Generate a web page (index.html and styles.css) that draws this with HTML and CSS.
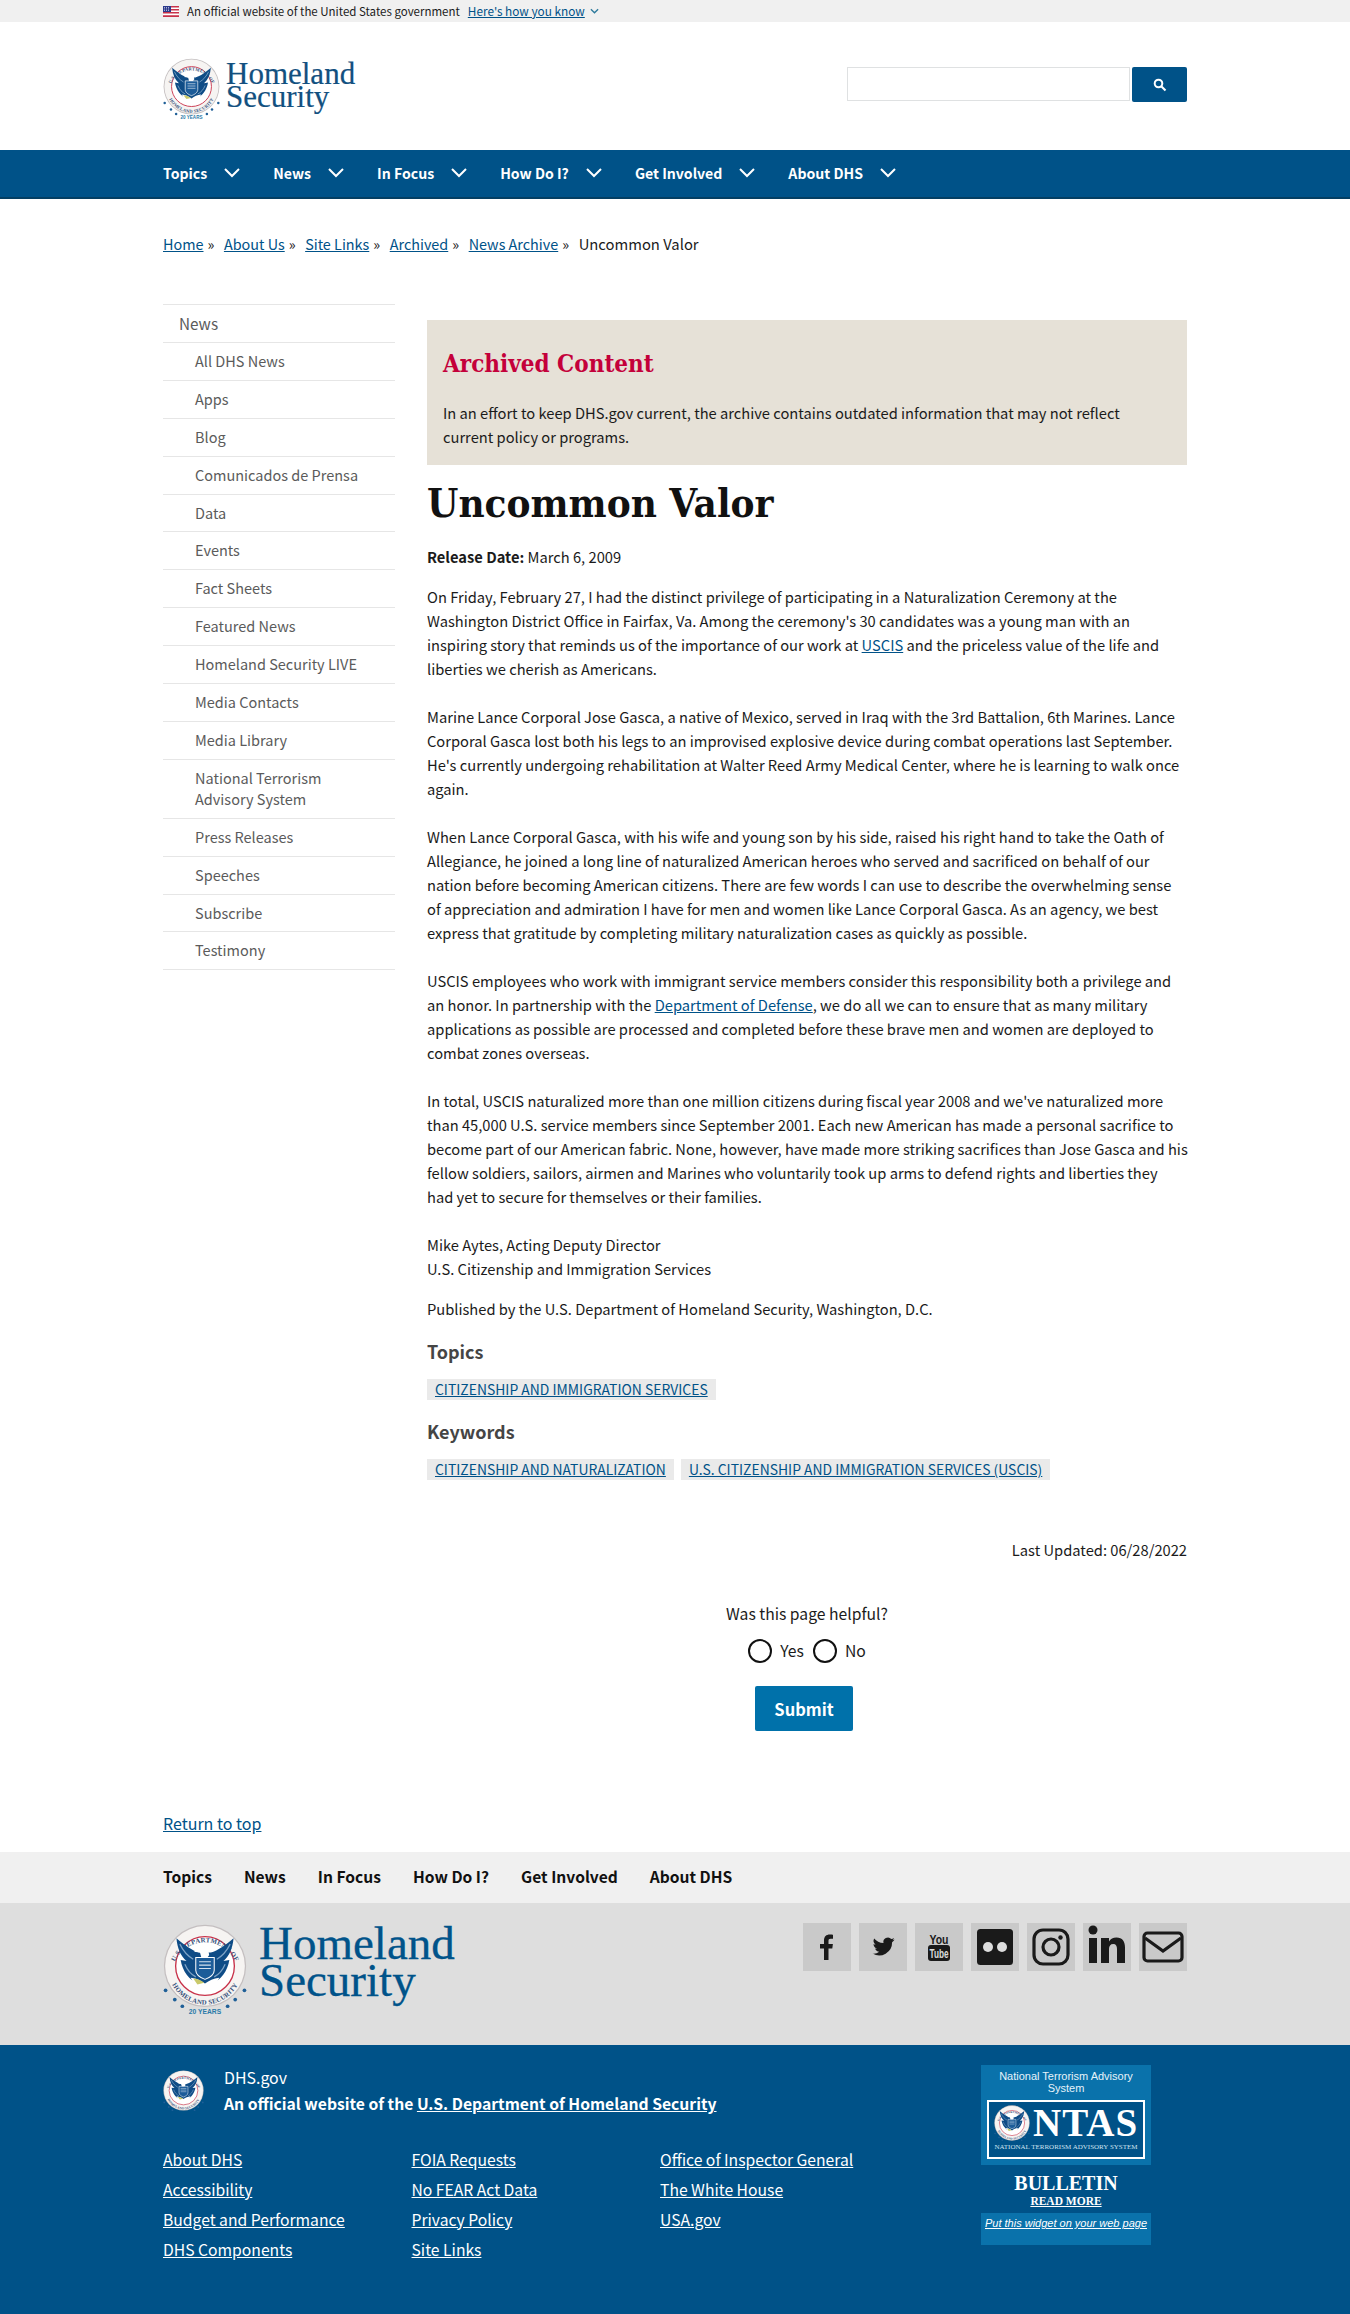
FILE: index.html
```html
<!DOCTYPE html>
<html lang="en">
<head>
<meta charset="utf-8">
<title>Uncommon Valor | Homeland Security</title>
<link rel="stylesheet" href="styles.css">
</head>
<body>
<svg class="defs" width="0" height="0" aria-hidden="true">
  <defs>
    <symbol id="seal" viewBox="0 0 100 112">
      <circle cx="50" cy="50" r="49" fill="#c4bfc0"/>
      <circle cx="50" cy="50" r="47.500" fill="#f6f4f2"/>
      <circle cx="50" cy="50" r="35" fill="#fff" stroke="#c8324a" stroke-width="1.600"/>
      <path id="sealtop" d="M11 55a39.500 39.500 0 0 1 78 0" fill="none"/>
      <path id="sealbot" d="M6 52a44 44 0 0 0 88 0" fill="none"/>
      <text class="sealtext"><textPath href="#sealtop" startOffset="50%" text-anchor="middle">U.S. DEPARTMENT OF</textPath></text>
      <text class="sealtext"><textPath href="#sealbot" startOffset="50%" text-anchor="middle">HOMELAND SECURITY</textPath></text>
      <path d="M43 34C35 32 24 24 16 17c1 12 5 21 12 27l-7-1c2 13 10 24 22 29h14c12-5 20-16 22-29l-7 1c7-6 11-15 12-27-8 7-19 15-27 17z" fill="#0f4c86"/>
      <path d="M20 24c4 8 9 14 16 18M80 24c-4 8-9 14-16 18M26 48c3 7 7 12 13 15M74 48c-3 7-7 12-13 15" fill="none" stroke="#7ea3c6" stroke-width="1.500"/>
      <path d="M42 28c3-4 10-5 14-1l3 4-5 1 1 5-3 4h-6l-2-7-7-1z" fill="#fff"/>
      <path d="M39 40h22v15c0 6-6 9-11 11-5-2-11-5-11-11z" fill="#1c5c99" stroke="#fff" stroke-width="1.200"/>
      <path d="M43 45h14M43 49h14M43 53h14" stroke="#d6e2ee" stroke-width="1.200"/>
      <path d="M33 64c7 1 12 3 17 7 5-4 10-6 17-7l-6 12-5 4H44l-5-4z" fill="#fff"/>
      <path d="M36 65c5 0 9 2 13 5l-8 2z" fill="#c9c96a"/>
      <g fill="#1f5f97">
        <circle cx="3" cy="79" r="2.200"/><circle cx="97" cy="79" r="2.200"/>
        <circle cx="14" cy="90" r="2.200"/><circle cx="86" cy="90" r="2.200"/>
        <circle cx="23" cy="98" r="2.200"/><circle cx="77" cy="98" r="2.200"/>
      </g>
      <text class="sealyears" x="50" y="107" text-anchor="middle">20 YEARS</text>
    </symbol>
    <symbol id="chev" viewBox="0 0 16 10"><path d="M1 1l7 7 7-7" fill="none" stroke="#fff" stroke-width="2"/></symbol>
  </defs>
</svg>

<div class="gov">
  <div class="wrap gov-in">
    <svg class="flag" viewBox="0 0 16 11"><rect width="16" height="11" fill="#fff"/><path d="M0 0h16v1.500H0zM0 3h16v1.500H0zM0 6h16v1.500H0zM0 9.200h16v1.800H0z" fill="#c8324a"/><rect width="8" height="6" fill="#2b3a8c"/><path d="M1 1.500h6M1 3h6M1 4.500h6" stroke="#fff" stroke-width=".6" stroke-dasharray="1 1"/></svg>
    <span>An official website of the United States government</span>
    <a href="#" class="how">Here's how you know</a>
    <svg class="howchev" viewBox="0 0 10 6"><path d="M1 1l4 4 4-4" fill="none" stroke="#2d7a9c" stroke-width="1.500"/></svg>
  </div>
</div>

<header class="wrap head">
  <a href="#" class="logo">
    <svg class="logo-seal"><use href="#seal"/></svg>
    <span class="logo-text">Homeland<br>Security</span>
  </a>
  <form class="search">
    <input class="search-in" type="text" aria-label="Search">
    <button class="search-btn" type="button" aria-label="Search">
      <svg viewBox="0 0 14 14" width="14" height="14"><circle cx="5.500" cy="5.500" r="3.800" fill="none" stroke="#fff" stroke-width="2"/><path d="M8.500 8.500l4 4" stroke="#fff" stroke-width="2.200"/></svg>
    </button>
  </form>
</header>

<nav class="mainnav">
  <div class="wrap mainnav-in">
    <a href="#">Topics<svg class="c"><use href="#chev"/></svg></a>
    <a href="#">News<svg class="c"><use href="#chev"/></svg></a>
    <a href="#">In Focus<svg class="c"><use href="#chev"/></svg></a>
    <a href="#">How Do I?<svg class="c"><use href="#chev"/></svg></a>
    <a href="#">Get Involved<svg class="c"><use href="#chev"/></svg></a>
    <a href="#">About DHS<svg class="c"><use href="#chev"/></svg></a>
  </div>
</nav>

<div class="wrap crumbs">
  <a href="#">Home</a><span class="sep">»</span><a href="#">About Us</a><span class="sep">»</span><a href="#">Site Links</a><span class="sep">»</span><a href="#">Archived</a><span class="sep">»</span><a href="#">News Archive</a><span class="sep">»</span><span class="crumb-cur">Uncommon Valor</span>
</div>

<div class="wrap layout">
  <aside class="side">
    <a class="side-top" href="#">News</a>
    <a href="#">All DHS News</a>
    <a href="#">Apps</a>
    <a href="#">Blog</a>
    <a href="#">Comunicados de Prensa</a>
    <a href="#">Data</a>
    <a href="#">Events</a>
    <a href="#">Fact Sheets</a>
    <a href="#">Featured News</a>
    <a href="#">Homeland Security LIVE</a>
    <a href="#">Media Contacts</a>
    <a href="#">Media Library</a>
    <a href="#">National Terrorism Advisory System</a>
    <a href="#">Press Releases</a>
    <a href="#">Speeches</a>
    <a href="#">Subscribe</a>
    <a href="#">Testimony</a>
  </aside>
  <main class="main">
    <section class="archived">
      <h2>Archived Content</h2>
      <p>In an effort to keep DHS.gov current, the archive contains outdated information that may not reflect current policy or programs.</p>
    </section>
    <h1>Uncommon Valor</h1>
    <p class="release"><b>Release Date:</b> March 6, 2009</p>
    <div class="body">
      <p>On Friday, February 27, I had the distinct privilege of participating in a Naturalization Ceremony at the Washington District Office in Fairfax, Va. Among the ceremony's 30 candidates was a young man with an inspiring story that reminds us of the importance of our work at <a href="#">USCIS</a> and the priceless value of the life and liberties we cherish as Americans.</p>
      <p>Marine Lance Corporal Jose Gasca, a native of Mexico, served in Iraq with the 3rd Battalion, 6th Marines. Lance Corporal Gasca lost both his legs to an improvised explosive device during combat operations last September. He's currently undergoing rehabilitation at Walter Reed Army Medical Center, where he is learning to walk once again.</p>
      <p>When Lance Corporal Gasca, with his wife and young son by his side, raised his right hand to take the Oath of Allegiance, he joined a long line of naturalized American heroes who served and sacrificed on behalf of our nation before becoming American citizens. There are few words I can use to describe the overwhelming sense of appreciation and admiration I have for men and women like Lance Corporal Gasca. As an agency, we best express that gratitude by completing military naturalization cases as quickly as possible.</p>
      <p>USCIS employees who work with immigrant service members consider this responsibility both a privilege and an honor. In partnership with the <a href="#">Department of Defense</a>, we do all we can to ensure that as many military applications as possible are processed and completed before these brave men and women are deployed to combat zones overseas.</p>
      <p class="para-wide">In total, USCIS naturalized more than one million citizens during fiscal year 2008 and we've naturalized more than 45,000 U.S. service members since September 2001. Each new American has made a personal sacrifice to become part of our American fabric. None, however, have made more striking sacrifices than Jose Gasca and his fellow soldiers, sailors, airmen and Marines who voluntarily took up arms to defend rights and liberties they<br>had yet to secure for themselves or their families.</p>
      <p>Mike Aytes, Acting Deputy Director<br>U.S. Citizenship and Immigration Services</p>
    </div>
    <p class="published">Published by the U.S. Department of Homeland Security, Washington, D.C.</p>
    <h3>Topics</h3>
    <div class="tags"><a href="#">CITIZENSHIP AND IMMIGRATION SERVICES</a></div>
    <h3>Keywords</h3>
    <div class="tags"><a href="#">CITIZENSHIP AND NATURALIZATION</a><a href="#">U.S. CITIZENSHIP AND IMMIGRATION SERVICES (USCIS)</a></div>
    <p class="updated">Last Updated: 06/28/2022</p>
    <form class="helpful">
      <p>Was this page helpful?</p>
      <div class="radios">
        <label><span class="radio"></span>Yes</label>
        <label><span class="radio"></span>No</label>
      </div>
      <button type="button" class="submit">Submit</button>
    </form>
  </main>
</div>

<div class="wrap totop"><a href="#">Return to top</a></div>

<div class="fnav">
  <div class="wrap fnav-in">
    <a href="#">Topics</a><a href="#">News</a><a href="#">In Focus</a><a href="#">How Do I?</a><a href="#">Get Involved</a><a href="#">About DHS</a>
  </div>
</div>

<div class="fbrand">
  <div class="wrap fbrand-in">
    <a href="#" class="flogo">
      <svg class="flogo-seal"><use href="#seal"/></svg>
      <span class="flogo-text">Homeland<br>Security</span>
    </a>
    <div class="social">
      <a href="#" aria-label="Facebook"><svg viewBox="0 0 48 48"><path d="M21 37V25.500h-4V21h4v-3.500c0-4 2.300-6 5.800-6 1.500 0 2.800.1 3.200.2v4h-2.300c-1.800 0-2.200.9-2.200 2.100V21h4.400l-.6 4.500h-3.800V37z" fill="#1a1a1a"/></svg></a>
      <a href="#" aria-label="Twitter"><svg viewBox="-5 -5 58 58"><path d="M38 15c-1 .5-2 .8-3 .9 1-.6 2-1.700 2.300-2.900-1 .6-2.100 1-3.300 1.300a5.500 5.500 0 0 0-9.400 5c-4.600-.2-8.600-2.400-11.300-5.700-1.500 2.500-.8 5.700 1.700 7.400-.9 0-1.700-.3-2.500-.7 0 2.700 1.900 5 4.400 5.500-.8.200-1.600.2-2.500.1.700 2.200 2.700 3.800 5.100 3.800a11 11 0 0 1-8.100 2.300A15.600 15.600 0 0 0 35 18.400c1.200-.8 2.200-2 3-3.400z" fill="#1a1a1a"/></svg></a>
      <a href="#" aria-label="YouTube"><svg viewBox="0 0 48 48"><rect x="13" y="22" width="22" height="16" rx="3" fill="#1a1a1a"/><text class="yt-you" x="14.500" y="20.500" textLength="19" lengthAdjust="spacingAndGlyphs">You</text><text class="yt-tube" x="14.500" y="35" textLength="19" lengthAdjust="spacingAndGlyphs">Tube</text></svg></a>
      <a href="#" aria-label="Flickr"><svg viewBox="0 0 48 48"><rect x="6" y="6" width="36" height="36" rx="3.500" fill="#1a1a1a"/><circle cx="17" cy="24" r="5" fill="#ddd"/><circle cx="31" cy="24" r="5" fill="#ddd"/></svg></a>
      <a href="#" aria-label="Instagram"><svg viewBox="0 0 48 48"><rect x="7" y="7" width="34" height="34" rx="9" fill="none" stroke="#1a1a1a" stroke-width="3.200"/><circle cx="24" cy="24" r="8" fill="none" stroke="#1a1a1a" stroke-width="3.200"/><circle cx="33.500" cy="14.500" r="2.200" fill="#1a1a1a"/></svg></a>
      <a href="#" aria-label="LinkedIn"><svg viewBox="0 0 48 48"><circle cx="10" cy="7" r="4.500" fill="#1a1a1a"/><path d="M6 15h8v25H6zM18 15h8v3.500c1.500-2.500 4-4 7.500-4 6 0 8.500 4 8.500 10V40h-8V26c0-3-1-5-3.700-5-3 0-4.300 2-4.300 5v14h-8z" fill="#1a1a1a"/></svg></a>
      <a href="#" aria-label="Email"><svg viewBox="0 0 48 48"><rect x="5" y="10" width="38" height="28" rx="3.500" fill="none" stroke="#1a1a1a" stroke-width="3.200"/><path d="M6 15l18 13 18-13" fill="none" stroke="#1a1a1a" stroke-width="3.200"/></svg></a>
    </div>
  </div>
</div>

<footer class="foot">
  <div class="wrap foot-in">
    <div class="foot-left">
      <div class="ident">
        <svg class="ident-seal" viewBox="0 0 100 100"><use href="#seal" width="100" height="112"/></svg>
        <div>
          <div class="ident-name">DHS.gov</div>
          <div class="ident-off">An official website of the <a href="#">U.S. Department of Homeland Security</a></div>
        </div>
      </div>
      <div class="foot-links">
        <ul>
          <li><a href="#">About DHS</a></li>
          <li><a href="#">Accessibility</a></li>
          <li><a href="#">Budget and Performance</a></li>
          <li><a href="#">DHS Components</a></li>
        </ul>
        <ul>
          <li><a href="#">FOIA Requests</a></li>
          <li><a href="#">No FEAR Act Data</a></li>
          <li><a href="#">Privacy Policy</a></li>
          <li><a href="#">Site Links</a></li>
        </ul>
        <ul>
          <li><a href="#">Office of Inspector General</a></li>
          <li><a href="#">The White House</a></li>
          <li><a href="#">USA.gov</a></li>
        </ul>
      </div>
    </div>
    <div class="ntas">
      <div class="ntas-top">
        <div class="ntas-title">National Terrorism Advisory System</div>
        <div class="ntas-card">
          <div class="ntas-row"><svg class="ntas-seal" viewBox="0 0 100 100"><use href="#seal" width="100" height="112"/></svg><span>NTAS</span></div>
          <div class="ntas-sub">NATIONAL TERRORISM ADVISORY SYSTEM</div>
        </div>
      </div>
      <div class="ntas-mid">
        <div class="ntas-bull">BULLETIN</div>
        <a class="ntas-more" href="#">READ MORE</a>
      </div>
      <div class="ntas-bot"><a href="#">Put this widget on your web page</a></div>
    </div>
  </div>
</footer>
</body>
</html>
```

FILE: styles.css
```css
* { box-sizing: border-box; }
html, body { margin: 0; padding: 0; }
body {
  font-family: "Noto Sans CJK SC", "Source Sans Pro", "Noto Sans", sans-serif;
  font-size: 14.700px;
  line-height: 24px;
  color: #1b1b1b;
  background: #fff;
}
a { color: #005288; }
p { margin: 0; }
.defs { position: absolute; }
.wrap { width: 1024px; margin: 0 auto; }

.sealtext { font: bold 8px "Liberation Serif", serif; fill: #35507a; letter-spacing: .3px; }
.sealyears { font: bold 8px "Liberation Sans", sans-serif; fill: #2a7aa8; }

.gov { background: #f0f0f0; height: 22px; }
.gov-in { display: flex; align-items: center; height: 22px; font-size: 11.500px; line-height: 22px; }
.flag { width: 16px; height: 11px; margin-right: 8px; }
.how { margin-left: 8px; color: #005288; font-size: 11.800px; }
.howchev { width: 9px; height: 6px; margin-left: 5px; }

.head { height: 128px; display: flex; justify-content: space-between; align-items: flex-start; }
.logo { display: flex; margin-top: 36px; text-decoration: none; }
.logo-seal { width: 57px; height: 64px; }
.logo-text { font: 31px/23px "Liberation Serif", serif; color: #12507f; margin: 4px 0 0 6px; -webkit-text-stroke: .2px #12507f; }
.search { display: flex; margin-top: 45px; gap: 2px; }
.search-in { width: 283px; height: 34px; border: 1px solid #dfe1e2; background: #fff; border-radius: 0; }
.search-btn { width: 55px; height: 35px; border: 0; background: #005288; border-radius: 2px; padding: 0; display: flex; align-items: center; justify-content: center; }

.mainnav { background: #005288; height: 49px; border-bottom: 2px solid #043f63; }
.mainnav-in { display: flex; height: 47px; align-items: center; gap: 33px; padding-bottom: 2px; }
.mainnav a { color: #fff; font-weight: 700; font-size: 14.100px; text-decoration: none; display: flex; align-items: center; }
.c { width: 16px; height: 10px; margin-left: 17px; }

.crumbs { padding-top: 33px; height: 105px; display: flex; align-items: flex-start; font-size: 14.400px; }
.sep { margin: 0 9.500px 0 4px; }
.crumb-cur { font-size: 14.800px; }
.crumbs a { color: #005288; }

.layout { display: flex; gap: 32px; align-items: flex-start; }
.side { width: 232px; border-top: 1px solid #e6e6e6; flex: none; }
.side a { display: block; padding: 8px 16px 8px 32px; line-height: 20.900px; border-bottom: 1px solid #e6e6e6; color: #5b5b5b; text-decoration: none; font-size: 14.500px; }
.side a.side-top { padding-left: 16px; font-size: 15.300px; }

.main { width: 760px; padding-top: 16px; }
.archived { background: #e6e1d7; height: 145px; padding: 26px 16px 0; }
.archived h2 { margin: 0 0 19px; font: 700 24px/36px "DejaVu Serif Condensed", "DejaVu Serif", serif; font-stretch: condensed; color: #c4003a; }
.main h1 { margin: 13px 0 17px; font: 700 40px/50px "DejaVu Serif Condensed", "DejaVu Serif", serif; font-stretch: condensed; color: #111; }
.release { margin-bottom: 16px; }
.release b { font-weight: 700; }
.body p { margin-bottom: 24px; }
.body p.para-wide { margin-right: -6px; }
.body p:last-child { margin-bottom: 16px; }
.main h3 { margin: 15px 0 13px; font-size: 18px; line-height: 30px; font-weight: 700; color: #454545; }
.tags { display: flex; gap: 7px; height: 22px; }
.tags a { background: #eaeaea; padding: 0 8px; font-size: 13.900px; line-height: 21px; height: 21px; }
.updated { text-align: right; margin-top: 57px; }
.helpful { width: 760px; display: flex; flex-direction: column; align-items: center; margin-top: 40px; font-size: 15.700px; }
.radios { display: flex; gap: 9px; margin-top: 13px; height: 24px; }
.radios label { display: flex; align-items: center; }
.radio { width: 24px; height: 24px; border: 2px solid #111; border-radius: 50%; margin-right: 8px; background: #fff; }
.submit { margin: 23px 6px 0 0; width: 98px; height: 45px; background: #0071aa; color: #fff; border: 0; border-radius: 2px; font: 700 16.500px/24px "Noto Sans CJK SC", sans-serif; }

.totop { margin-top: 80px; height: 41px; font-size: 16px; }

.fnav { background: #f0f0f0; height: 51px; }
.fnav-in { display: flex; gap: 32px; height: 51px; align-items: center; padding-bottom: 3px; }
.fnav a { color: #111; font-weight: 700; font-size: 15.600px; text-decoration: none; }

.fbrand { background: #dedede; height: 142px; }
.fbrand-in { display: flex; justify-content: space-between; align-items: flex-start; }
.flogo { display: flex; margin-top: 21px; text-decoration: none; }
.flogo-seal { width: 84px; height: 94px; }
.flogo-text { font: 47px/37px "Liberation Serif", serif; color: #00538a; margin: 1px 0 0 12px; -webkit-text-stroke: .3px #00538a; }
.social { display: flex; gap: 8px; margin-top: 20px; }
.social a { width: 48px; height: 48px; background: #c9c9c9; display: block; }
.social svg { width: 48px; height: 48px; display: block; }
.yt-you { font: 700 13px "Liberation Sans", sans-serif; fill: #1a1a1a; }
.yt-tube { font: 700 12px "Liberation Sans", sans-serif; fill: #ddd; }

.foot { background: #005288; height: 270px; color: #fff; }
.foot a { color: #fff; }
.foot-in { display: flex; justify-content: space-between; align-items: flex-start; padding: 20px 36px 0 0; }
.foot-left { width: 760px; }
.ident { display: flex; gap: 20px; }
.ident-seal { width: 41px; height: 41px; margin-top: 5px; }
.ident-name { font-size: 15.900px; line-height: 26px; }
.ident-off { font-weight: 700; font-size: 15.700px; line-height: 26px; }
.foot-links { display: flex; margin-top: 28px; }
.foot-links ul { list-style: none; margin: 0; padding: 0; width: 248.500px; }
.foot-links li { line-height: 30px; font-size: 15.700px; }

.ntas { width: 170px; font-family: "Liberation Sans", Arial, sans-serif; text-align: center; }
.ntas-top { background: #0a72ab; height: 100px; padding: 5px 6px 0; }
.ntas-title { font-size: 11px; line-height: 12px; color: #e6f3fa; }
.ntas-card { margin-top: 6px; height: 59px; border: 2px solid #fff; background: #005288; padding: 2px 5px 0; }
.ntas-row { display: flex; align-items: center; gap: 3px; height: 38px; }
.ntas-seal { width: 36px; height: 36px; flex: none; }
.ntas-row span { font: 700 39px/38px "Liberation Serif", serif; color: #fff; letter-spacing: 1px; }
.ntas-sub { font: 7px/11px "Liberation Serif", serif; color: #cfe3f0; white-space: nowrap; }
.ntas-mid { height: 48px; padding-top: 8px; }
.ntas-bull { font: 700 20px/21px "Liberation Serif", serif; }
.ntas-more { display: block; font: 700 11.500px/14px "Liberation Serif", serif; }
.ntas-bot { background: #0a72ab; height: 32px; padding-top: 3px; font-size: 11px; line-height: 14px; font-style: italic; }
```
